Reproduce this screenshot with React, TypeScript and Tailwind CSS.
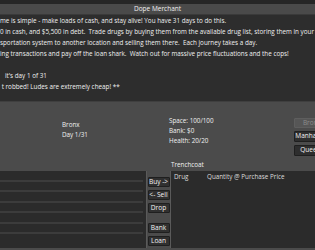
import React from "react";

const intro = [
  "me is simple - make loads of cash, and stay alive! You have 31 days to do this.",
  "0 in cash, and $5,500 in debt.  Trade drugs by buying them from the available drug list, storing them in your",
  "sportation system to another location and selling them there.  Each journey takes a day.",
  "ing transactions and pay off the loan shark.  Watch out for massive price fluctuations and the cops!",
  "",
  "   it's day 1 of 31",
  " t robbed! Ludes are extremely cheap! **",
];

const locations = [
  { name: "Bronx", disabled: true },
  { name: "Manhattan", disabled: false },
  { name: "Queens", disabled: false },
];

function ActionButton({ label }: { label: string }) {
  return (
    <button className="flex h-[10px] w-[22px] items-center justify-center whitespace-nowrap rounded-[1px] border border-[#1f1f1f] bg-[#303030] text-[6.6px] leading-none text-[#f2f2f2]">
      {label}
    </button>
  );
}

export default function App() {
  return (
    <div className="flex h-[250px] w-[315px] flex-col overflow-hidden bg-[#4b4b4b] font-['Open_Sans',sans-serif] text-[6.5px] text-[#f0f0f0]">
      <div className="h-[4px] shrink-0 bg-[#262626]" />
      <div className="flex h-[11px] shrink-0 items-center justify-center border-b border-[#3a3a3a] bg-[#4a4a4a]">
        Dope Merchant
      </div>
      <div className="h-[86px] shrink-0 whitespace-pre bg-[#2d2d2d] text-[6.3px] leading-[11px]">
        {intro.map((line, i) => (
          <div key={i} className="h-[11px]">
            {line}
          </div>
        ))}
      </div>

      <div className="flex h-[70px] shrink-0 border-t border-[#3f3f3f] text-[6.3px]">
        <div className="w-[169px] shrink-0 pl-[62px] pt-[18px] leading-[10px]">
          <div>Bronx</div>
          <div>Day 1/31</div>
        </div>
        <div className="flex w-[125px] shrink-0 flex-col pt-[14px] leading-[10px]">
          <div>Space: 100/100</div>
          <div>Bank: $0</div>
          <div>Health: 20/20</div>
          <div className="mt-auto pb-[1px] pl-[2px]">Trenchcoat</div>
        </div>
        <div className="flex shrink-0 flex-col gap-[3px] pt-[16px]">
          {locations.map((loc) => (
            <button
              key={loc.name}
              disabled={loc.disabled}
              className={
                loc.disabled
                  ? "h-[10px] w-[36px] whitespace-nowrap rounded-[1px] border border-[#5e5e5e] bg-[#565656] text-center text-[6.5px] leading-none text-[#8c8c8c]"
                  : "h-[11px] w-[36px] whitespace-nowrap rounded-[1px] border border-[#1f1f1f] bg-[#2e2e2e] text-center text-[6.5px] leading-none text-[#f2f2f2]"
              }
            >
              {loc.name}
            </button>
          ))}
        </div>
      </div>

      <div className="flex h-[77px] shrink-0">
        <div className="flex w-[147px] shrink-0 flex-col border-r border-[#5a5a5a] bg-[#2b2b2b] pr-[3px]">
          {Array.from({ length: 7 }).map((_, i) => (
            <div key={i} className="h-[10.5px] border-b-2 border-[#3c3c3c] last:border-b-0" />
          ))}
        </div>
        <div className="flex w-[23px] shrink-0 flex-col items-center pt-[6px]">
          <div className="flex flex-col gap-[3px]">
            <ActionButton label="Buy ->" />
            <ActionButton label="<- Sell" />
            <ActionButton label="Drop" />
          </div>
          <div className="mt-[10px] flex flex-col gap-[3px]">
            <ActionButton label="Bank" />
            <ActionButton label="Loan" />
          </div>
        </div>
        <div className="flex-1 border-l border-[#5a5a5a] bg-[#2b2b2b] pl-[3px] pt-[1px] text-[6.3px]">
          <div className="flex text-[#dcdcdc]">
            <span className="w-[33px]">Drug</span>
            <span>Quantity @ Purchase Price</span>
          </div>
        </div>
      </div>
    </div>
  );
}
